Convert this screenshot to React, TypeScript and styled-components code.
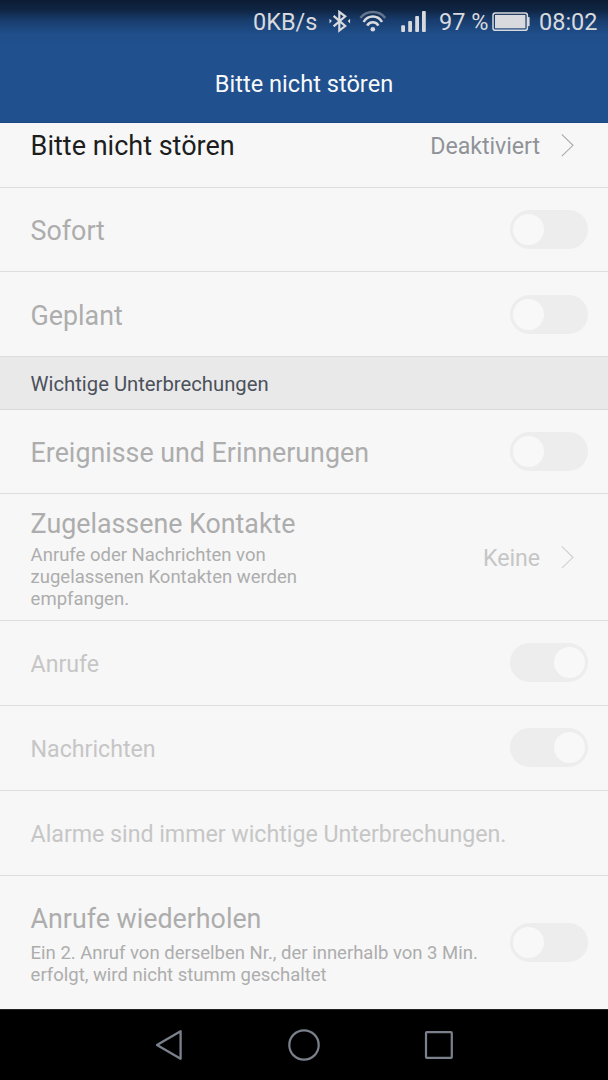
import React from 'react';
import styled, { createGlobalStyle } from 'styled-components';

const GlobalStyle = createGlobalStyle`
  * { box-sizing: border-box; }
  body { margin: 0; background: #f7f7f7; font-family: Roboto, "Liberation Sans", sans-serif; }
`;

const Screen = styled.main`
  width: 608px;
  height: 1080px;
  display: flex;
  flex-direction: column;
  overflow: hidden;
  background: #f7f7f7;
`;

const Header = styled.header`
  height: 123px;
  flex: none;
  background: linear-gradient(#0c1c33 0, #0f2543 10px, #183c6c 20px, #1f4e8a 34px, #20508d 44px);
  border-bottom: 1px solid #1b4783;
`;

const StatusBar = styled.div`
  height: 44px;
  display: flex;
  align-items: center;
  justify-content: flex-end;
  padding-right: 9px;
  color: #d9dadd;
  font-size: 23.5px;
  line-height: 42px;
  white-space: nowrap;
`;

const StatusText = styled.span<{ $width: number }>`
  width: ${p => p.$width}px;
`;

const StatusIcon = styled.svg<{ $gap: number }>`
  display: block;
  flex: none;
  margin-right: ${p => p.$gap}px;
`;

const PageTitle = styled.h1`
  margin: 0;
  height: 79px;
  line-height: 80px;
  text-align: center;
  font-size: 23.6px;
  font-weight: 400;
  color: #f7f8fa;
`;

const Row = styled.div<{ $height: number; $last?: boolean }>`
  height: ${p => p.$height}px;
  flex: none;
  display: flex;
  align-items: center;
  justify-content: space-between;
  padding: 0 20px 0 30.6px;
  border-bottom: ${p => (p.$last ? 'none' : '1px solid #dedede')};
`;

const FirstRow = styled(Row)`
  align-items: flex-start;
  padding-top: 1px;
`;

const Label = styled.div<{ $tone?: string; $size?: number; $drop?: number }>`
  padding-top: ${p => p.$drop ?? 2}px;
  font-size: ${p => p.$size ?? 26.8}px;
  line-height: 40px;
  color: ${p => p.$tone ?? '#adadad'};
  white-space: nowrap;
`;

const MinorLabel = styled(Label)`
  font-size: 23.2px;
  letter-spacing: -0.02px;
  color: #c6c6c6;
`;

const TextBlock = styled.div<{ $width: number; $top: number }>`
  align-self: flex-start;
  width: ${p => p.$width}px;
  padding-top: ${p => p.$top}px;
`;

const Summary = styled.p<{ $top?: number }>`
  margin: ${p => p.$top ?? 0}px 0 0;
  font-size: 18.5px;
  line-height: 22px;
  color: #adadad;
  white-space: pre-line;
`;

const SectionHeader = styled.h2`
  margin: 0;
  height: 53px;
  flex: none;
  padding-left: 30.6px;
  line-height: 54px;
  font-size: 20.25px;
  font-weight: 400;
  color: #4b515b;
  background: #e9e9e9;
  border-bottom: 1px solid #d9d9d9;
`;

const ValueGroup = styled.div<{ $tone: string }>`
  display: flex;
  align-items: center;
  gap: 20px;
  padding: 2px 13px 0 0;
  font-size: 23.2px;
  letter-spacing: -0.05px;
  line-height: 40px;
  color: ${p => p.$tone};
`;

const Track = styled.div<{ $on: boolean; $top: number }>`
  width: 78px;
  height: 39px;
  flex: none;
  align-self: flex-start;
  margin-top: ${p => p.$top}px;
  display: flex;
  align-items: center;
  justify-content: ${p => (p.$on ? 'flex-end' : 'flex-start')};
  padding: 0 3.3px;
  border-radius: 20px;
  background: #ededed;
`;

const Thumb = styled.div`
  width: 31px;
  height: 31px;
  border-radius: 50%;
  background: #f8f8f8;
`;

const NavBar = styled.nav`
  height: 71px;
  flex: none;
  display: flex;
  justify-content: center;
  gap: 103px;
  padding-top: 19px;
  background: #000;
  border-top: 1px solid #242424;
`;

const Toggle = ({ on = false, top = 22 }: { on?: boolean; top?: number }) => (
  <Track $on={on} $top={top} role="switch" aria-checked={on}><Thumb /></Track>
);

const Chevron = ({ color }: { color: string }) => (
  <svg width="15" height="24" viewBox="0 0 15 24" fill="none" stroke={color} strokeWidth="1.1">
    <path d="M1.8 0.4 13 11.3 1.8 22.2" />
  </svg>
);

export default function App() {
  return (
    <Screen>
      <GlobalStyle />
      <Header>
        <StatusBar>
          <StatusText $width={76}>0KB/s</StatusText>
          <StatusIcon $gap={8} width="22" height="24" viewBox="0 0 22 24" fill="none" stroke="#d9dadd" strokeWidth="2.2">
            <path d="M4.6 5.8 16.2 16 10.3 20.6V1.9L16.2 6.4 4.6 16.4" />
            <path d="M0.5 8.8v4.6l2.4-2.3zM21.1 8.8v4.6l-2.4-2.3z" fill="#d9dadd" stroke="none" />
          </StatusIcon>
          <StatusIcon $gap={13} width="29" height="24" viewBox="0 0 29 24" fill="none" stroke="#d9dadd" strokeWidth="2.5">
            <path d="M1.4 8A16 16 0 0 1 26.2 8" stroke="#65748d" />
            <path d="M4.6 12A10.5 10.5 0 0 1 23 12M8.2 15.6A6.3 6.3 0 0 1 19.4 15.6" />
            <circle cx="13.8" cy="19.3" r="2.3" fill="#d9dadd" stroke="none" />
          </StatusIcon>
          <StatusIcon $gap={12} width="26" height="24" viewBox="0 0 26 24" fill="#d9dadd">
            <rect x="0.2" y="15.2" width="3.8" height="6.7" rx="1" />
            <rect x="7.2" y="10.9" width="3.8" height="11" rx="1" />
            <rect x="14.2" y="5.9" width="3.8" height="16" rx="1" />
            <rect x="21" y="0.9" width="3.8" height="21" rx="1" />
          </StatusIcon>
          <StatusText $width={53}>97 %</StatusText>
          <StatusIcon $gap={9} width="38" height="20" viewBox="0 0 38 20">
            <rect x="1" y="0.9" width="34.4" height="17.4" rx="2.4" fill="none" stroke="#d9dadd" strokeWidth="1.5" />
            <rect x="3" y="2.9" width="30.4" height="13.4" fill="#d9dadd" />
            <path d="M35.7 5.1H37.6V14.1H35.7z" fill="#d9dadd" />
          </StatusIcon>
          <StatusText $width={60}>08:02</StatusText>
        </StatusBar>
        <PageTitle>Bitte nicht stören</PageTitle>
      </Header>

      <FirstRow $height={65}>
        <Label $size={27} $tone="#1d1d1d">Bitte nicht stören</Label>
        <ValueGroup $tone="#8f9399">Deaktiviert<Chevron color="#a9a9a9" /></ValueGroup>
      </FirstRow>
      <Row $height={84}><Label>Sofort</Label><Toggle /></Row>
      <Row $height={85}><Label $drop={4}>Geplant</Label><Toggle top={23} /></Row>
      <SectionHeader>Wichtige Unterbrechungen</SectionHeader>
      <Row $height={84}><Label>Ereignisse und Erinnerungen</Label><Toggle /></Row>
      <Row $height={127}>
        <TextBlock $width={300} $top={8}>
          <Label>Zugelassene Kontakte</Label>
          <Summary>{'Anrufe oder Nachrichten von\nzugelassenen Kontakten werden\nempfangen.'}</Summary>
        </TextBlock>
        <ValueGroup $tone="#c6c6c6">Keine<Chevron color="#cfcfcf" /></ValueGroup>
      </Row>
      <Row $height={85}><MinorLabel>Anrufe</MinorLabel><Toggle on /></Row>
      <Row $height={85}><MinorLabel>Nachrichten</MinorLabel><Toggle on /></Row>
      <Row $height={85}><MinorLabel>Alarme sind immer wichtige Unterbrechungen.</MinorLabel></Row>
      <Row $height={133} $last>
        <TextBlock $width={460} $top={21}>
          <Label>Anrufe wiederholen</Label>
          <Summary $top={3}>{'Ein 2. Anruf von derselben Nr., der innerhalb von 3 Min.\nerfolgt, wird nicht stumm geschaltet'}</Summary>
        </TextBlock>
        <Toggle top={47} />
      </Row>

      <NavBar>
        <svg width="32" height="32" viewBox="0 0 32 32" fill="none" stroke="#7b818c" strokeWidth="2.3" strokeLinejoin="round">
          <path d="M4 16 27.6 2.2V29.8z" />
        </svg>
        <svg width="32" height="32" viewBox="0 0 32 32" fill="none" stroke="#7b818c" strokeWidth="2.2">
          <circle cx="16" cy="16" r="14.7" />
        </svg>
        <svg width="32" height="32" viewBox="0 0 32 32" fill="none" stroke="#7b818c" strokeWidth="2.2">
          <rect x="3" y="3.1" width="25.8" height="25.8" rx="0.8" />
        </svg>
      </NavBar>
    </Screen>
  );
}
